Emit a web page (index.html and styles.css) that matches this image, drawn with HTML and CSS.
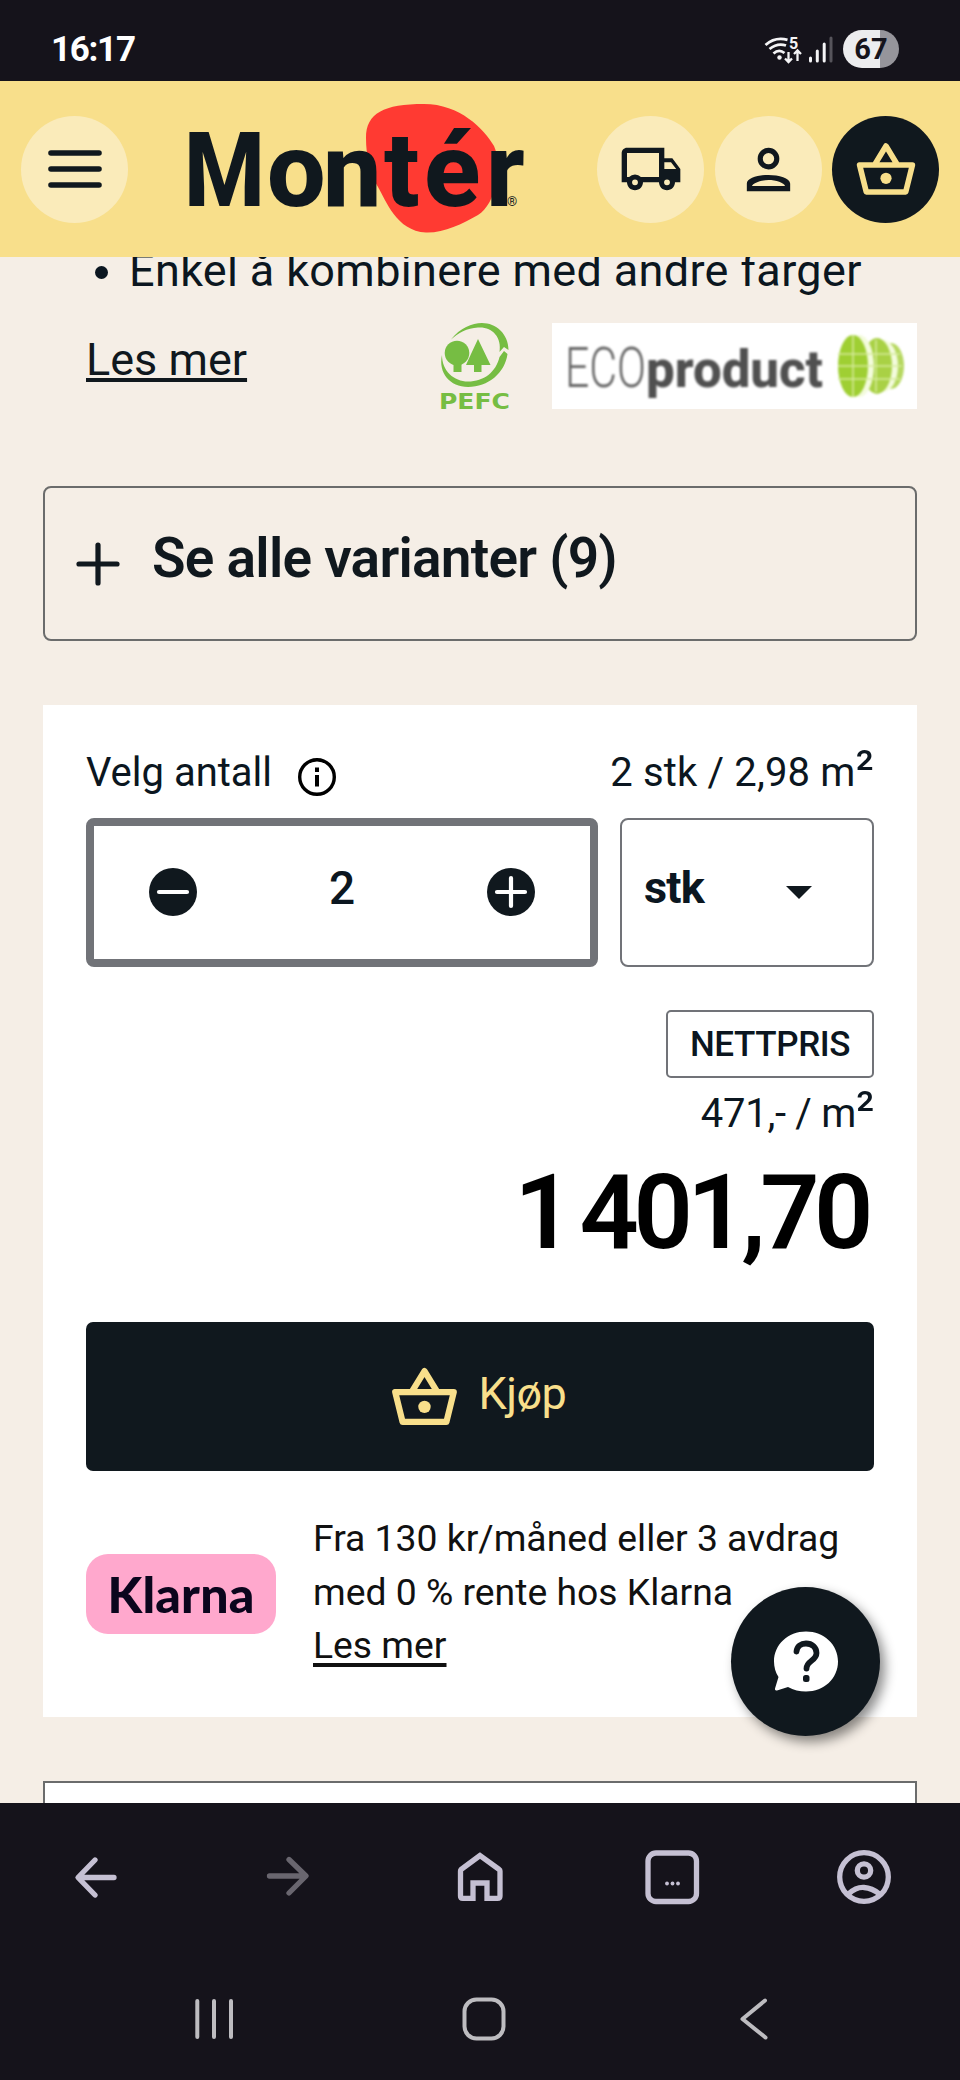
FILE: index.html
```html
<!DOCTYPE html>
<html lang="no">
<head>
<meta charset="utf-8">
<title>Montér</title>
<link rel="stylesheet" href="styles.css">
</head>
<body>
<svg class="defs" aria-hidden="true">
  <symbol id="basket" viewBox="0 0 24 24">
    <path d="M2.1 10.5h19.8l-2.5 10.1H4.6z M7.8 10.3L12 3.4l4.2 6.9" fill="none" stroke="currentColor" stroke-width="2.1" stroke-linejoin="round"/>
    <circle cx="12" cy="15.5" r="2.1" fill="currentColor"/>
  </symbol>
</svg>
<div class="phone">
  <div class="status">
    <span class="clock">16:17</span>
    <div class="indicators">
      <svg class="wifi" width="40" height="32" viewBox="0 0 40 32">
        <g fill="none" stroke="#f4f4f6" stroke-width="2.8">
          <path d="M2.5 11Q12 2.5 24.500 5.800"/><path d="M6.500 15Q14.500 8.500 23 11.500"/><path d="M10.500 19.500Q16 14.500 21.500 19"/>
          <path d="M25.500 18v9.500M22 24.500l3.500 3.500 3.500-3.500M34.500 27v-10M31 20l3.500-3.500L38 20" stroke-width="2.300"/>
        </g>
        <circle cx="16.500" cy="23.500" r="2.200" fill="#f4f4f6"/>
        <text x="26" y="14.500" class="wifi-gen">5</text>
      </svg>
      <svg class="signal" width="26" height="30" viewBox="0 0 26 30" stroke-width="3" stroke-linecap="round">
        <path d="M2.500 23v3M9.300 16v10M16.200 9v17" stroke="#f4f4f6"/><path d="M23 3v23" stroke="#56545b"/>
      </svg>
      <span class="battery">67</span>
    </div>
  </div>

  <header class="header">
    <button class="round" aria-label="Meny">
      <svg width="54" height="40" viewBox="0 0 54 40"><path d="M3 4h48M3 20h48M3 36h48" stroke="#10181e" stroke-width="5.600" stroke-linecap="round"/></svg>
    </button>
    <svg class="brand" width="350" height="140" viewBox="184 98 350 140">
      <path d="M366 137C366 112 384 103 424 103C460 103 484 128 494 145C503 165 496 203 478 214C462 223 444 232 426 231.500C396 230 386 199 378 186C370 173 366 155 366 137z" fill="#ff3a32"/>
      <text class="brand-name" y="205" x="184" textLength="81" lengthAdjust="spacingAndGlyphs">M</text>
      <text class="brand-name" y="205" x="267 323 384 424 486">ontér</text>
      <text class="brand-reg" x="507" y="205">®</text>
    </svg>
    <nav class="tools">
      <button class="round" aria-label="Levering">
        <svg width="64" height="64" viewBox="0 0 24 24"><path fill="#10181e" fill-rule="evenodd" d="M20 8h-3V4H3C1.900 4 1 4.900 1 6v11h2c0 1.660 1.340 3 3 3s3-1.340 3-3h6c0 1.660 1.340 3 3 3s3-1.340 3-3h2v-5l-3-4zM3 6h12v9H8.220A3 3 0 0 0 3.780 15H3zM6 18.100a1.100 1.100 0 1 1 0-2.200 1.100 1.100 0 0 1 0 2.200zM18 18.100a1.100 1.100 0 1 1 0-2.200 1.100 1.100 0 0 1 0 2.200zM17 9.500h2.500l1.960 2.500H17z"/></svg>
      </button>
      <button class="round" aria-label="Min side">
        <svg width="65" height="65" viewBox="0 0 24 24"><path fill="#10181e" fill-rule="evenodd" d="M12 4a4 4 0 1 1 0 8 4 4 0 0 1 0-8zm0 1.900a2.100 2.100 0 1 0 0 4.200 2.100 2.100 0 0 0 0-4.200zM4 20v-2.800C4 15.200 8.200 14 12 14s8 1.200 8 3.200V20zM5.900 18.100h12.200c-.3-1.200-3.400-2.200-6.100-2.200s-5.800 1-6.100 2.200z"/></svg>
      </button>
      <button class="round dark" aria-label="Handlekurv"><svg width="64" height="64"><use href="#basket"/></svg></button>
    </nav>
  </header>

  <main class="page">
    <ul class="features"><li>Enkel å kombinere med andre farger</li></ul>
    <div class="more-row">
      <a class="more">Les mer</a>
      <div class="labels">
        <svg class="pefc-logo" width="69" height="86" viewBox="0 0 69 86" fill="#76bd43">
          <path d="M11 16.500C20 5 32 0 42 0C56 0 68.500 11 68.500 27L64 24L59.500 29C62 14 52 3.500 38 4.500C27 5 18 10 11 16.500z"/>
          <path d="M2 32C2 48 14 58.500 28 58.500C44 58.500 56 49 59.500 34L64 28L67.500 31C65 50 48 64 28 64C10 64-2 50 2 32z"/>
          <circle cx="17" cy="30" r="12.300"/><path d="M13.500 40h8v9h-8z"/>
          <path d="M38 16L50.500 42H41.500v7h-7.500v-7h-8L31 31z"/>
          <text class="pefc" x="-1" y="86" textLength="71" lengthAdjust="spacingAndGlyphs">PEFC</text>
        </svg>
        <svg class="eco" width="365" height="86" viewBox="552 323 365 86">
          <g class="soft">
            <text class="eco-thin" x="565" y="387" textLength="81" lengthAdjust="spacingAndGlyphs">ECO</text>
            <text class="eco-bold" x="646" y="387" textLength="177" lengthAdjust="spacingAndGlyphs">product</text>
            <ellipse cx="891" cy="366" rx="13" ry="23" fill="#b6d860"/>
            <ellipse cx="883" cy="366" rx="15" ry="26" fill="#f3fbdc"/>
            <ellipse cx="877" cy="366" rx="15" ry="28" fill="#a9d145"/>
            <ellipse cx="859" cy="366" rx="15" ry="31" fill="#f3fbdc"/>
            <ellipse cx="853" cy="366" rx="15" ry="31" fill="#9fcf33"/>
            <path d="M838 354h62M838 366h64M838 379h62M853 335v62M876 340v52" stroke="#d6ec9c" stroke-width="1.500"/>
          </g>
        </svg>
      </div>
    </div>

    <button class="variants">
      <svg width="44" height="44" viewBox="0 0 44 44"><path d="M3 22h38M22 3v38" stroke="#10181e" stroke-width="5.200" stroke-linecap="round"/></svg>
      <span>Se alle varianter (9)</span>
    </button>

    <section class="card">
      <div class="qty-head">
        <span class="qty-label">Velg antall</span>
        <svg class="info" width="38" height="38" viewBox="0 0 38 38"><circle cx="19" cy="19" r="17.300" fill="none" stroke="#000" stroke-width="3.400"/><path d="M17 9.500h4v4.500h-4zM17 17h4v11.500h-4z"/></svg>
        <span class="qty-sum">2 stk / 2,98 m<span class="sq">²</span></span>
      </div>
      <div class="qty-row">
        <div class="stepper">
          <svg width="48" height="48" viewBox="0 0 48 48"><circle cx="24" cy="24" r="24" fill="#10181e"/><path d="M10 24h28" stroke="#fff" stroke-width="4.200" stroke-linecap="round"/></svg>
          <span>2</span>
          <svg width="48" height="48" viewBox="0 0 48 48"><circle cx="24" cy="24" r="24" fill="#10181e"/><path d="M10 24h28M24 10v28" stroke="#fff" stroke-width="4.200" stroke-linecap="round"/></svg>
        </div>
        <div class="unit"><span>stk</span><svg width="26" height="13" viewBox="0 0 26 13"><path d="M0 0h26L13 13z" fill="#10181e"/></svg></div>
      </div>
      <div class="prices">
        <span class="net">NETTPRIS</span>
        <span class="per">471,- / m<span class="sq">²</span></span>
        <span class="total">1 401,70</span>
      </div>
      <button class="buy"><svg width="71" height="71"><use href="#basket"/></svg><span>Kjøp</span></button>
      <div class="finance">
        <span class="klarna">Klarna</span>
        <p>Fra 130 kr/måned eller 3 avdrag<br>med 0 % rente hos Klarna<br><a>Les mer</a></p>
      </div>
    </section>
    <section class="next"></section>

    <button class="chat" aria-label="Hjelp">
      <svg width="66" height="62" viewBox="0 0 66 62">
        <path d="M33 0.500C51 .5 65 13.500 65 30.500S51 60.500 33 60.500C26.500 60.500 20.500 59 15 56L4 59.500Q1.500 60 2 57.500L5.500 46C2.500 41.500 1 36 1 30.500C1 13.500 15 .5 33 .5z" fill="#fff"/>
        <path d="M23.500 20.500C24 15 28 12.500 33 12.500C39 12.500 43.500 16.500 43.500 22C43.500 30 33.500 29.500 33.500 37.500" fill="none" stroke="#10181e" stroke-width="5.800" stroke-linecap="round"/>
        <rect x="30" y="44" width="6.500" height="7" rx="2.500" fill="#10181e"/>
      </svg>
    </button>
  </main>

  <nav class="browser">
    <svg width="56" height="56" viewBox="0 0 56 56"><path d="M46 28.500H13M27 11L10 28.500 27 46" class="ln"/></svg>
    <svg class="off" width="56" height="56" viewBox="0 0 56 56"><path d="M9.500 27H43M29 10.500L46 27 29 44" class="ln"/></svg>
    <svg width="56" height="56" viewBox="0 0 56 56"><path d="M28 6.500L9 20.500Q8.500 21 8.500 22V47q0 2.300 2.300 2.300H21V34H35v15.300H45.500q2.500 0 2.500-2.300V22q0-1-.8-1.500z" class="ln house"/></svg>
    <svg width="56" height="56" viewBox="0 0 56 56"><rect x="4" y="4" width="48.500" height="48.500" rx="8" class="ln"/><g fill="#c5c0d3"><circle cx="23" cy="34.500" r="1.900"/><circle cx="28.500" cy="34.500" r="1.900"/><circle cx="34" cy="34.500" r="1.900"/></g></svg>
    <svg width="56" height="56" viewBox="0 0 56 56"><circle cx="28" cy="28" r="24.300" class="ln"/><circle cx="28" cy="21.500" r="6.700" class="ln"/><path d="M12.500 45Q20 38 28 38.500T43.500 45" class="ln"/></svg>
  </nav>
  <nav class="system">
    <svg width="44" height="44" viewBox="0 0 44 44"><path d="M5.300 4v36M22 4v36M39 4v36" class="thin"/></svg>
    <svg width="46" height="46" viewBox="0 0 46 46"><rect x="3.500" y="3.500" width="39" height="39" rx="12" class="thin"/></svg>
    <svg width="44" height="44" viewBox="0 0 44 44"><path d="M33 3.500L10.500 22 33.500 40.500" class="thin"/></svg>
  </nav>
</div>
</body>
</html>
```

FILE: styles.css
```css
* { box-sizing: border-box; }
body { margin: 0; background: #15131b; font-family: Roboto, "Liberation Sans", sans-serif; color: #0b1620; }
button { border: 0; padding: 0; margin: 0; font: inherit; color: inherit; background: none; }
svg { display: block; flex: none; }
.defs { position: absolute; width: 0; height: 0; }
.phone { width: 960px; height: 2080px; overflow: hidden; display: flex; flex-direction: column; }

.status { height: 81px; flex: none; display: flex; justify-content: space-between; align-items: flex-start; padding: 30px 61px 0 51px; color: #fff; }
.clock { font-size: 35px; font-weight: 700; line-height: 40px; letter-spacing: -1.3px; }
.indicators { display: flex; gap: 6px; }
.wifi { margin-top: 4px; margin-right: -1px; }
.wifi-gen { font-size: 16px; font-weight: 700; fill: #f4f4f6; }
.signal { margin-top: 5px; margin-right: 3px; }
.battery { width: 56px; height: 38px; border-radius: 19px; background: linear-gradient(90deg, #ececee 37px, #96959b 37px); color: #15131b; font-size: 29px; font-weight: 700; line-height: 38px; text-align: center; }

.header { height: 176px; background: #f8df8b; display: flex; align-items: center; padding: 0 21px; flex: none; position: relative; z-index: 1; }
.round { width: 107px; height: 107px; border-radius: 50%; background: #faebba; display: grid; place-items: center; flex: none; }
.round.dark { background: #10181e; color: #f8df8b; }
.brand { margin-left: 56px; overflow: visible; }
.brand-name { font-size: 104px; font-weight: 800; fill: #10181e; }
.brand-reg { font-size: 13px; fill: #10181e; }
.tools { display: flex; gap: 10.500px; margin-left: auto; }

.page { height: 1546px; flex: none; background: #f5eee6; padding: 0 43px; overflow: hidden; position: relative; display: flex; flex-direction: column; }
.features { margin: -16px 0 0 43px; padding: 0 0 0 43px; font-size: 45px; line-height: 60px; letter-spacing: .35px; list-style: none; flex: none; }
.features li { display: flex; align-items: center; white-space: nowrap; }
.features li::before { content: ""; width: 13px; height: 13px; border-radius: 50%; background: #0b1620; margin: 0 21px 0 -34px; position: relative; top: 1px; }
.more-row { display: flex; justify-content: space-between; height: 86px; margin-top: 22px; padding-left: 43px; flex: none; }
.more { font-size: 45px; line-height: 60px; margin-top: 7px; text-decoration: underline; text-decoration-thickness: 4px; text-underline-offset: 3px; color: #10181e; }
.labels { display: flex; gap: 43px; }
.eco { background: #fff; }
.soft { filter: blur(1.3px); }
.pefc-logo { overflow: visible; }
.pefc { font: 700 21px "DejaVu Sans", sans-serif; }
.eco-thin { font-size: 55px; font-weight: 300; fill: #666; }
.eco-bold { font-size: 52px; font-weight: 800; fill: #505050; }

.variants { height: 155px; margin-top: 77px; border: 2.500px solid #6b6c6c; border-radius: 8px; display: flex; align-items: center; gap: 32px; padding-left: 31px; font-size: 55px; font-weight: 600; letter-spacing: -.75px; color: #10181e; flex: none; }
.variants svg { margin-top: 1px; }
.variants span { margin-top: -12px; }

.card { height: 1012px; background: #fff; margin-top: 64px; padding: 0 43px; flex: none; display: flex; flex-direction: column; }
.qty-head { height: 113px; display: flex; align-items: flex-start; padding-top: 43px; font-size: 40px; line-height: 50px; }
.qty-label { letter-spacing: 0; width: 212px; }
.info { margin-top: 10px; }
.qty-sum { margin-left: auto; letter-spacing: .15px; }
.sq { font-size: 50px; line-height: 0; }
.qty-row { display: flex; gap: 22px; height: 149px; }
.stepper { width: 512px; border: 8px solid #717378; border-radius: 8px; display: flex; justify-content: space-between; align-items: center; padding: 0 55px; font-size: 46px; font-weight: 500; }
.stepper span, .unit span { margin-top: -10px; }
.stepper svg { margin-top: -1px; }
.unit { flex: 1; border: 2px solid #717378; border-radius: 8px; display: flex; justify-content: space-between; align-items: center; padding: 0 60px 0 22px; font-size: 45px; font-weight: 700; letter-spacing: -.8px; }
.prices { display: flex; flex-direction: column; align-items: flex-end; margin-top: 43px; height: 312px; }
.net { width: 208px; height: 68px; border: 2px solid #717378; border-radius: 5px; font-size: 35px; font-weight: 500; line-height: 66px; text-align: center; letter-spacing: -.4px; }
.per { font-size: 40px; line-height: 50px; margin-top: 11px; letter-spacing: -.3px; }
.total { font-size: 104px; font-weight: 600; line-height: 120px; margin: 14px 6px 0 0; letter-spacing: -5.500px; word-spacing: -9px; color: #000; }
.buy { height: 149px; background: #10181e; border-radius: 7px; color: #f8df8b; display: flex; align-items: center; justify-content: center; gap: 19px; padding-right: 5px; font-size: 45px; letter-spacing: -.5px; flex: none; }
.buy span { margin-top: -7px; }
.finance { display: flex; align-items: flex-start; margin-top: 41px; gap: 37px; }
.klarna { width: 190px; height: 80px; margin-top: 42px; border-radius: 22px; background: #ffa8cd; color: #0b051d; font: 900 50px/80px Lato, sans-serif; text-align: center; letter-spacing: .2px; flex: none; }
.finance p { margin: 0; font-size: 37.300px; line-height: 53.500px; color: #111; white-space: nowrap; }
.finance a { text-decoration: underline; text-decoration-thickness: 4px; text-underline-offset: 5px; }
.next { margin-top: 64px; height: 100px; background: #fff; border: 2.500px solid #6b6c6c; flex: none; }
.chat { position: absolute; left: 731px; top: 1330px; width: 149px; height: 149px; border-radius: 50%; background: #10181e; display: grid; place-items: center; box-shadow: 5px 6px 12px rgba(0, 0, 0, .45); }

.browser { height: 148px; display: flex; flex: none; }
.browser svg { margin: 46px 68px 0; }
.ln { fill: none; stroke: #c5c0d3; stroke-width: 5.300; stroke-linecap: round; stroke-linejoin: round; }
.house { stroke-linejoin: miter; }
.off .ln { stroke: #69666f; }
.system { display: flex; justify-content: space-around; align-items: center; height: 129px; padding: 7px 72px 0 80px; flex: none; }
.thin { fill: none; stroke: #bdbcc0; stroke-width: 4; stroke-linecap: round; stroke-linejoin: round; }
```
